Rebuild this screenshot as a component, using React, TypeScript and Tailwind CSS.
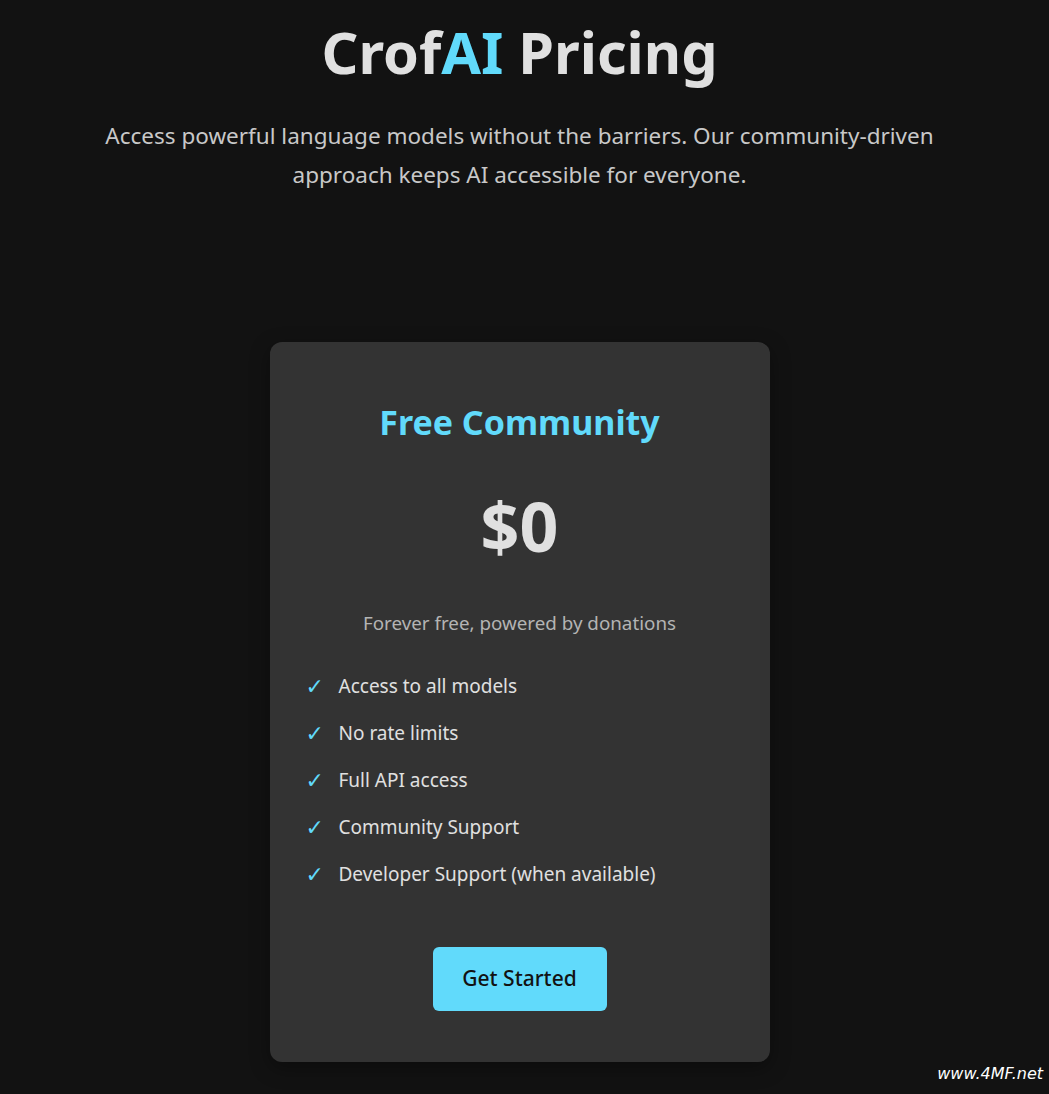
import React from "react";

const features = [
  "Access to all models",
  "No rate limits",
  "Full API access",
  "Community Support",
  "Developer Support (when available)",
];

export default function App() {
  return (
    <div
      className="relative min-h-[1094px] w-full bg-[#121212] pr-[10px] text-[#e0e0e0]"
      style={{ fontFamily: '"Noto Sans", "Open Sans", sans-serif' }}
    >
      <div className="flex flex-col items-center">
        <h1 className="mt-[14px] text-[57.5px] font-bold leading-[76px] text-[#e0e0e0]">
          Crof<span className="text-[#61dafb]">AI</span> Pricing
        </h1>
        <p className="mt-[26px] max-w-[880px] text-center text-[22.5px] leading-[39px] text-[#c8c8c8]">
          Access powerful language models without the barriers. Our community-driven approach keeps AI accessible for everyone.
        </p>

        <div className="mt-[148px] flex w-[500px] flex-col items-center rounded-[12px] bg-[#333333] px-[36px] pb-[51px] pt-[56px] shadow-[0_6px_20px_rgba(0,0,0,0.35)]">
          <h2 className="text-[34px] font-bold leading-[48px] text-[#61dafb]">Free Community</h2>
          <div className="mt-[38px] text-[68px] font-bold leading-[84px] text-[#e0e0e0]">$0</div>
          <p className="mt-[42px] text-[18.8px] leading-[26px] text-[#b4b4b4]">Forever free, powered by donations</p>
          <ul className="mt-[37px] flex w-full flex-col gap-[20px]">
            {features.map((f) => (
              <li key={f} className="flex items-center text-[19px] leading-[27px] text-[#e0e0e0]">
                <span className="w-[33px] text-[22px] font-semibold text-[#61dafb]" style={{ fontFamily: '"DejaVu Sans", sans-serif' }}>✓</span>
                <span>{f}</span>
              </li>
            ))}
          </ul>
          <button className="mt-[59px] h-[64px] w-[174px] rounded-[6px] bg-[#61dafb] text-[21px] font-medium text-[#121212]">
            Get Started
          </button>
        </div>
      </div>
      <div className="absolute bottom-[8px] right-[6px] text-[16px] italic text-white" style={{ fontFamily: '"DejaVu Sans", sans-serif' }}>
        www.4MF.net
      </div>
    </div>
  );
}
